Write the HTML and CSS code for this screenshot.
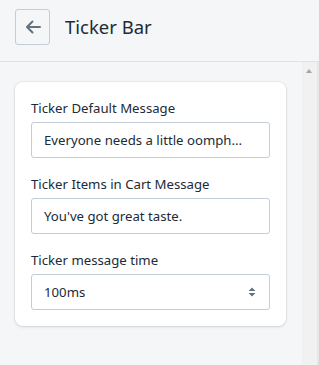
FILE: index.html
```html
<!DOCTYPE html>
<html lang="en">
<head>
    <meta charset="UTF-8">
    <meta name="viewport" content="width=device-width, initial-scale=1.0">
    <title>Ticker Bar</title>
    <link rel="stylesheet" href="styles.css">
</head>
<body>
    <div id="header">
        <button id="back" aria-label="Back">
            <svg width="20" height="20" viewBox="0 0 20 20">
                <path d="M17 10H4M9.5 4.5L4 10l5.5 5.5" fill="none" stroke="#637381" stroke-width="2" stroke-linecap="round" stroke-linejoin="round"/>
            </svg>
        </button>
        <span class="title">Ticker Bar</span>
    </div>
    <div id="main">
        <div id="content">
            <div class="card">
                <label class="field">
                    <span class="label">Ticker Default Message</span>
                    <input class="text" type="text" value="Everyone needs a little oomph...">
                </label>
                <label class="field">
                    <span class="label">Ticker Items in Cart Message</span>
                    <input class="text" type="text" value="You've got great taste.">
                </label>
                <label class="field">
                    <span class="label">Ticker message time</span>
                    <span class="select">
                        <select>
                            <option>100ms</option>
                            <option>200ms</option>
                            <option>500ms</option>
                        </select>
                        <svg class="arrows" width="10" height="12" viewBox="0 0 10 12">
                            <path d="M5 1.5L8.5 5h-7zM5 10.5L1.5 7h7z" fill="#637381"/>
                        </svg>
                    </span>
                </label>
            </div>
        </div>
        <div id="scrollbar">
            <span class="up"></span>
        </div>
    </div>
</body>
</html>
```

FILE: styles.css
```css
* {
    font-family: "Noto Sans", "Open Sans", sans-serif;
    box-sizing: border-box;
}

body {
    margin: 0;
    padding: 0;
    background: #f4f6f8;
    color: #212b36;
    overflow: hidden;
    height: 365px;
}

#header {
    height: 62px;
    display: flex;
    align-items: center;
    padding-left: 15px;
    border-bottom: 1px solid #dfe3e8;
}

#back {
    width: 35px;
    height: 36px;
    margin-top: -8px;
    padding: 0;
    border: 1px solid #c4cdd5;
    border-radius: 3px;
    background: #f4f6f8;
    display: flex;
    align-items: center;
    justify-content: center;
}

.title {
    margin-left: 15px;
    margin-top: -8px;
    font-size: 18.5px;
    line-height: 24px;
}

#main {
    display: flex;
    height: 303px;
}

#content {
    flex: 1;
    padding: 20px 16px 0 15px;
}

.card {
    background: #fff;
    border-radius: 8px;
    box-shadow: 0 0 0 1px rgba(63, 63, 68, 0.05), 0 1px 3px 0 rgba(63, 63, 68, 0.15);
    padding: 16px 16px 16px;
    display: flex;
    flex-direction: column;
    gap: 16px;
}

.field {
    display: flex;
    flex-direction: column;
    gap: 4px;
}

.label {
    font-size: 13.2px;
    line-height: 20px;
}

.text, select {
    width: 100%;
    height: 36px;
    border: 1px solid #c4cdd5;
    border-radius: 3px;
    padding: 0 12px;
    font-size: 13.2px;
    color: #212b36;
    background: #fff;
}

.select {
    position: relative;
    display: block;
}

select {
    appearance: none;
    padding-left: 12px;
}

.arrows {
    position: absolute;
    right: 13px;
    top: 12px;
    pointer-events: none;
}

#scrollbar {
    width: 17px;
    background: #f1f1f1;
    border-right: 2px solid #e6e6e6;
    position: relative;
}

.up {
    position: absolute;
    left: 4px;
    top: 7px;
    width: 0;
    height: 0;
    border-left: 3.5px solid transparent;
    border-right: 3.5px solid transparent;
    border-bottom: 4px solid #a3a3a3;
}
```
